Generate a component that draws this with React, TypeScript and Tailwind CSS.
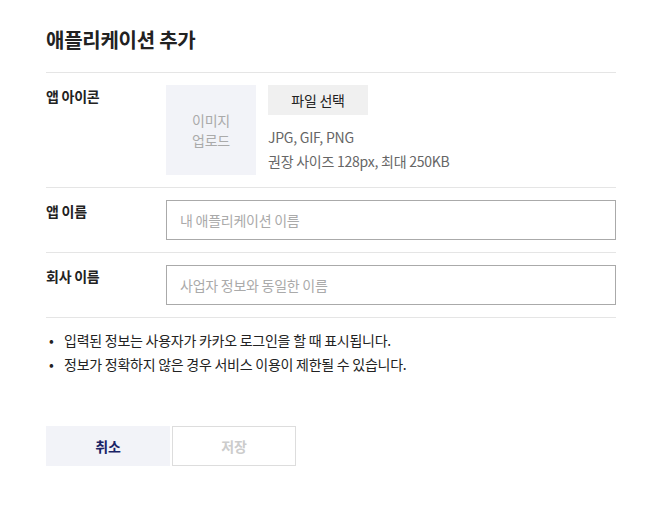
export default function App() {
  return (
    <div className="min-h-screen bg-white pl-[46px] pr-[48px] pt-[25px] text-[#222] tracking-[-0.25px]" style={{ fontFamily: '"Noto Sans CJK KR", "Noto Sans", sans-serif' }}>
      <h1 className="text-[20px] font-bold leading-[30px] pb-[17px] border-b border-[#e5e5e5]">애플리케이션 추가</h1>

      {/* 앱 아이콘 */}
      <div className="flex py-[12px] border-b border-[#e5e5e5]">
        <div className="w-[120px] shrink-0 text-[14px] font-bold leading-[22px]">앱 아이콘</div>
        <div className="w-[90px] h-[90px] bg-[#f2f3f8] flex items-center justify-center text-center text-[14px] leading-[20px] text-[#aaa]">
          이미지
          <br />
          업로드
        </div>
        <div className="ml-[12px] flex flex-col">
          <button className="w-[100px] h-[30px] bg-[#f0f0f0] text-[14px] text-[#222]">파일 선택</button>
          <div className="mt-[10px] text-[14px] leading-[24px] text-[#666]">
            <div>JPG, GIF, PNG</div>
            <div>권장 사이즈 128px, 최대 250KB</div>
          </div>
        </div>
      </div>

      {/* 앱 이름 */}
      <div className="flex py-[12px] border-b border-[#e5e5e5]">
        <div className="w-[120px] shrink-0 text-[14px] font-bold leading-[22px]">앱 이름</div>
        <input
          placeholder="내 애플리케이션 이름"
          className="flex-1 h-[40px] border border-[#aaa] px-[13px] text-[14px] placeholder:text-[#aaa] outline-none"
        />
      </div>

      {/* 회사 이름 */}
      <div className="flex py-[12px] border-b border-[#e5e5e5]">
        <div className="w-[120px] shrink-0 text-[14px] font-bold leading-[22px]">회사 이름</div>
        <input
          placeholder="사업자 정보와 동일한 이름"
          className="flex-1 h-[40px] border border-[#aaa] px-[13px] text-[14px] placeholder:text-[#aaa] outline-none"
        />
      </div>

      <ul className="mt-[10px] text-[14px] leading-[24px] text-[#222]">
        <li className="flex"><span className="w-[18px] pl-[3px]">•</span>입력된 정보는 사용자가 카카오 로그인을 할 때 표시됩니다.</li>
        <li className="flex"><span className="w-[18px] pl-[3px]">•</span>정보가 정확하지 않은 경우 서비스 이용이 제한될 수 있습니다.</li>
      </ul>

      <div className="mt-[50px] flex gap-[2px]">
        <button className="w-[124px] h-[40px] bg-[#f2f3f8] text-[14px] font-bold text-[#1a2466]">취소</button>
        <button className="w-[124px] h-[40px] border border-[#ddd] text-[14px] font-bold text-[#ccc]">저장</button>
      </div>
    </div>
  )
}
